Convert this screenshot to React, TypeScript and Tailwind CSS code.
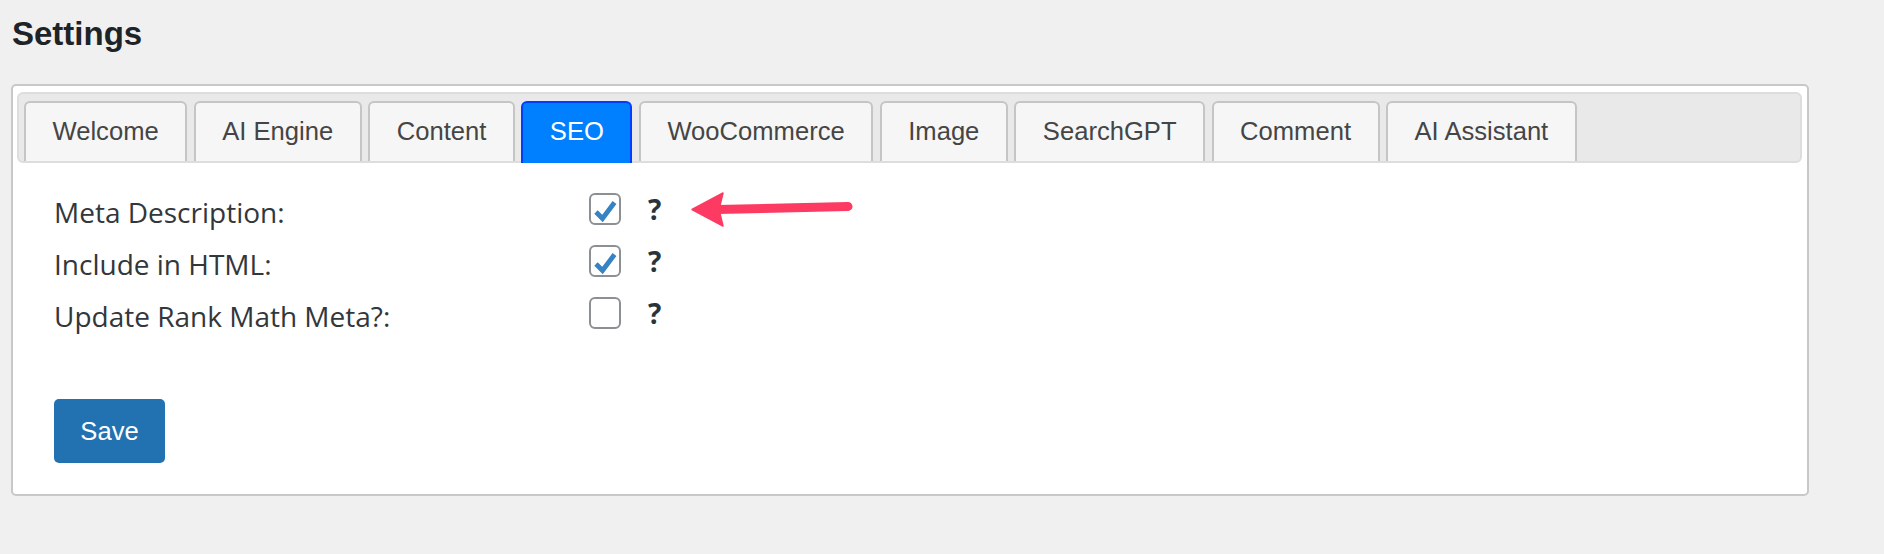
import React from "react";

const tabs = ["Welcome", "AI Engine", "Content", "SEO", "WooCommerce", "Image", "SearchGPT", "Comment", "AI Assistant"];

const rows = [
  { label: "Meta Description:", checked: true },
  { label: "Include in HTML:", checked: true },
  { label: "Update Rank Math Meta?:", checked: false },
];

function Checkbox({ checked }: { checked: boolean }) {
  return (
    <div className="w-[32px] h-[32px] shrink-0 rounded-[6px] border-2 border-[#8c8f94] bg-white">
      {checked && (
        <svg width="28" height="28" viewBox="0 0 28 28">
          <path d="M5 17 L11.5 23.5 L23.5 7.5" fill="none" stroke="#3582c4" strokeWidth="4.8" strokeLinejoin="miter" />
        </svg>
      )}
    </div>
  );
}

export default function App() {
  return (
    <div className="min-h-[554px] w-[1884px] bg-[#f0f0f1] font-['Liberation_Sans',Arial,sans-serif]">
      <h1 className="pl-[12px] pt-[14px] text-[33px] leading-[40px] font-bold text-[#1d2327]">Settings</h1>
      <div className="relative mt-[30px] ml-[11px] w-[1798px] rounded-[5px] border-2 border-[#c8c8c8] bg-white pt-[6px] pl-[4px] pr-[5px] pb-[31px]">
        <div className="flex items-end gap-[6.5px] rounded-[6px] border-2 border-[#dddddd] bg-[#e9e9e9] pt-[7px] pl-[5px]">
          {tabs.map((t) =>
            t === "SEO" ? (
              <div
                key={t}
                className="-mb-[2px] rounded-t-[6px] border-2 border-b-0 border-[#003eff] bg-[#007fff] px-[26.5px] pt-[14px] pb-[18px] text-[25.6px] leading-[28px] text-white"
              >
                {t}
              </div>
            ) : (
              <div
                key={t}
                className="rounded-t-[6px] border-2 border-b-0 border-[#c5c5c5] bg-[#f6f6f6] px-[26.5px] pt-[14px] pb-[16px] text-[25.6px] leading-[28px] text-[#454545]"
              >
                {t}
              </div>
            )
          )}
        </div>
        <div className="pl-[37px] pt-[20px]">
          {rows.map((r) => (
            <div key={r.label} className="flex h-[52px] items-center">
              <span className="mt-[5px] w-[535px] shrink-0 font-['Open_Sans',sans-serif] text-[28px] leading-[36px] text-[#32373c]">
                {r.label}
              </span>
              <Checkbox checked={r.checked} />
              <span className="ml-[27px] font-['Open_Sans',sans-serif] text-[28px] font-bold leading-[36px] text-[#2c3338]">?</span>
            </div>
          ))}
          <button className="mt-[60px] flex h-[64px] w-[111px] items-center justify-center rounded-[5px] bg-[#2271b1] text-[25.6px] text-white">
            Save
          </button>
        </div>
        <svg className="absolute left-[678px] top-[104px]" width="162" height="40" viewBox="0 0 162 40">
          <line x1="26" y1="19.5" x2="157" y2="16.5" stroke="#fd3a62" strokeWidth="9" strokeLinecap="round" />
          <path d="M1 19.5 L32 3 L28 19.5 L32 36 Z" fill="#fd3a62" stroke="#fd3a62" strokeWidth="1.5" strokeLinejoin="round" />
        </svg>
      </div>
    </div>
  );
}
